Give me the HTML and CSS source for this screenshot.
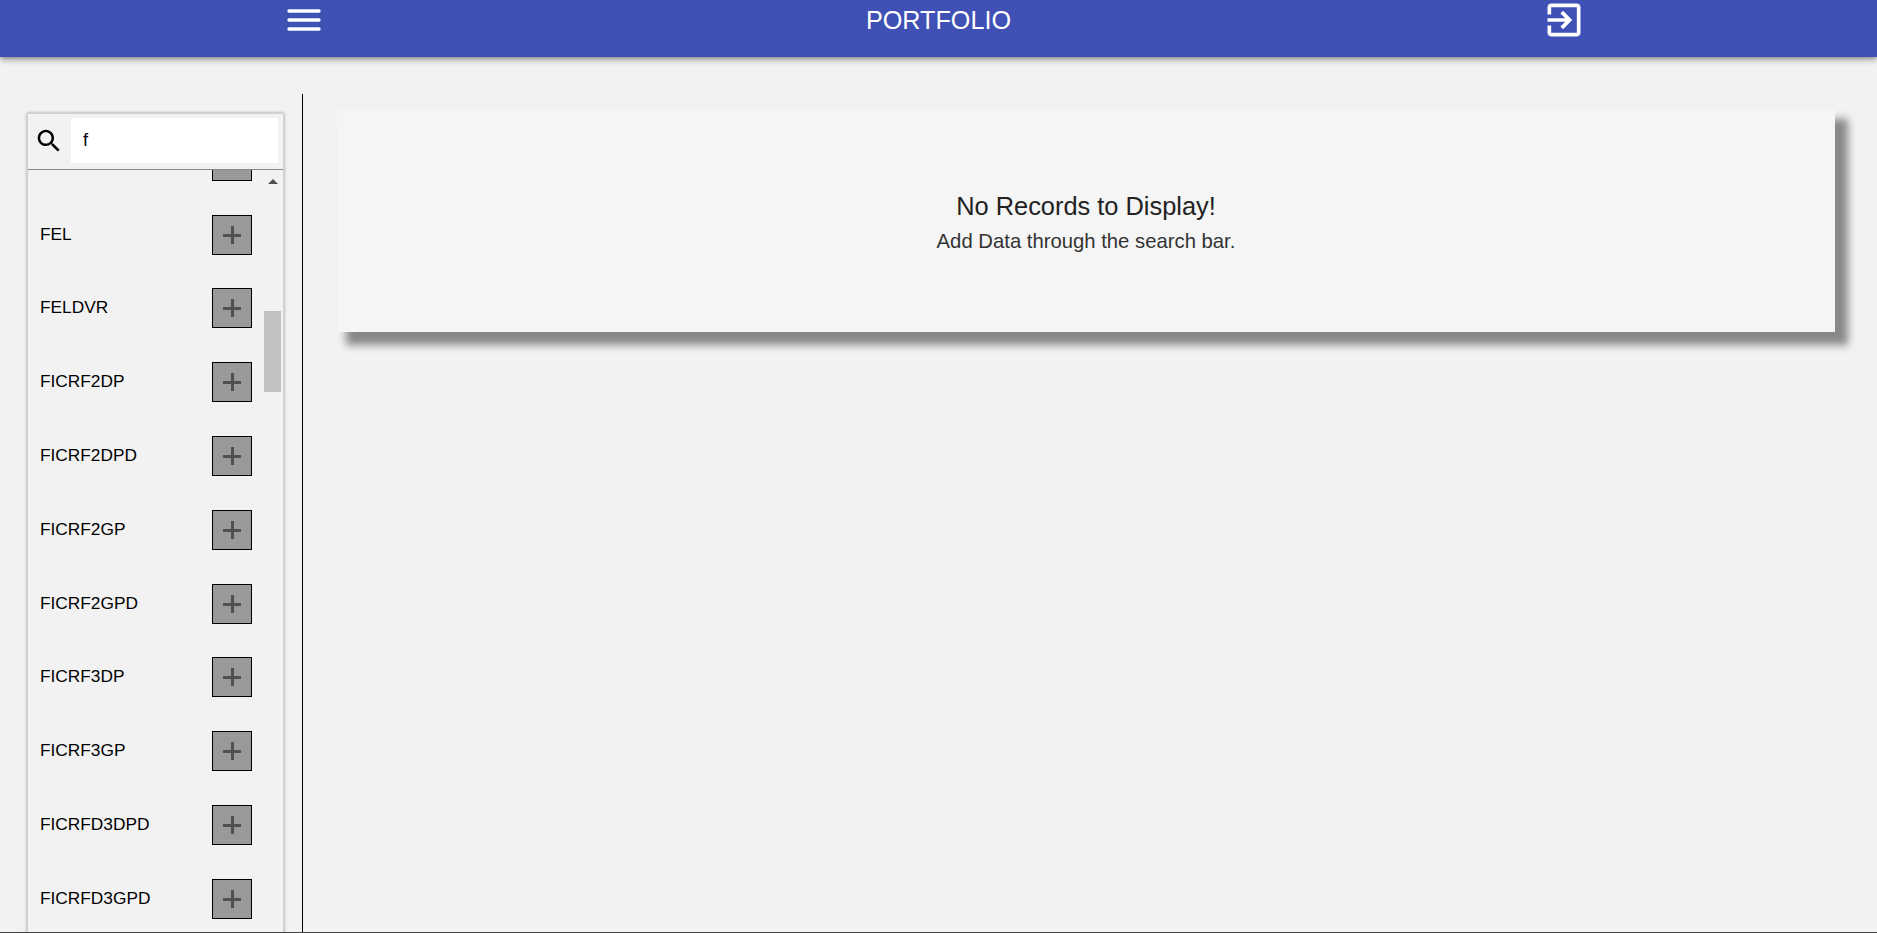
FILE: index.html
```html
<!DOCTYPE html>
<html lang="en">
<head>
<meta charset="utf-8">
<title>Portfolio</title>
<link rel="stylesheet" href="styles.css">
</head>
<body>
<header class="topbar">
  <button class="topbar-btn menu-btn" aria-label="Menu">
    <svg width="34" height="24" viewBox="0 0 34 24"><path d="M2 3h30M2 12h30M2 21h30" stroke="#fff" stroke-width="3.4" stroke-linecap="round" fill="none"/></svg>
  </button>
  <div class="topbar-title">PORTFOLIO</div>
  <button class="topbar-btn exit-btn" aria-label="Sign out">
    <svg width="44" height="44" viewBox="0 0 24 24"><path fill="#fff" d="M10.09 15.59L11.5 17l5-5-5-5-1.41 1.41L12.67 11H3v2h9.67l-2.58 2.59zM19 3H5c-1.11 0-2 .9-2 2v4h2V5h14v14H5v-4H3v4c0 1.1.89 2 2 2h14c1.1 0 2-.9 2-2V5c0-1.1-.9-2-2-2z"/></svg>
  </button>
</header>
<div class="page">
  <aside class="sidebar">
    <div class="finder">
      <div class="search-row">
        <svg class="search-icon" width="30" height="30" viewBox="0 0 24 24"><path fill="#000" d="M15.5 14h-.79l-.28-.27C15.41 12.59 16 11.11 16 9.5 16 5.91 13.09 3 9.5 3S3 5.91 3 9.5 5.91 16 9.5 16c1.61 0 3.09-.59 4.23-1.57l.27.28v.79l5 4.99L20.49 19l-4.99-5zm-6 0C7.01 14 5 11.99 5 9.5S7.01 5 9.5 5 14 7.01 14 9.5 11.99 14 9.5 14z"/></svg>
        <div class="search-input">f</div>
      </div>
      <div class="results">
        <div class="list">
          <div class="row"><span></span><button class="add"></button></div>
          <div class="row"><span>FEL</span><button class="add"></button></div>
          <div class="row"><span>FELDVR</span><button class="add"></button></div>
          <div class="row"><span>FICRF2DP</span><button class="add"></button></div>
          <div class="row"><span>FICRF2DPD</span><button class="add"></button></div>
          <div class="row"><span>FICRF2GP</span><button class="add"></button></div>
          <div class="row"><span>FICRF2GPD</span><button class="add"></button></div>
          <div class="row"><span>FICRF3DP</span><button class="add"></button></div>
          <div class="row"><span>FICRF3GP</span><button class="add"></button></div>
          <div class="row"><span>FICRFD3DPD</span><button class="add"></button></div>
          <div class="row"><span>FICRFD3GPD</span><button class="add"></button></div>
        </div>
        <div class="scrollbar">
          <div class="scroll-up"></div>
          <div class="scroll-thumb"></div>
        </div>
      </div>
    </div>
  </aside>
  <main class="content">
    <section class="empty-card">
      <h2>No Records to Display!</h2>
      <p>Add Data through the search bar.</p>
    </section>
  </main>
</div>
</body>
</html>
```

FILE: styles.css
```css
html, body {
  margin: 0;
  height: 100%;
  overflow: hidden;
}
body {
  background: #f2f2f2;
  font-family: "Liberation Sans", Arial, sans-serif;
  color: #000;
}
.topbar {
  height: 57px;
  background: #3f51b5;
  box-shadow: 0 2px 4px -1px rgba(0,0,0,.3), 0 4px 5px rgba(0,0,0,.14), 0 1px 10px rgba(0,0,0,.12);
  display: grid;
  grid-template-columns: 1fr 1fr 1fr;
  align-items: start;
  position: relative;
  color: #fff;
}
.topbar-btn {
  background: none;
  border: 0;
  padding: 0;
  display: flex;
  justify-self: start;
}
.menu-btn {
  margin: 8px 0 0 287px;
}
.exit-btn {
  margin: -2px 0 0 291px;
}
.topbar-title {
  font-size: 25.2px;
  text-align: center;
  margin-top: 6px;
}
.page {
  display: flex;
  height: 838px;
  margin-top: 37px;
  border-bottom: 1px solid #444;
}
.sidebar {
  width: 303px;
  flex: none;
  box-sizing: border-box;
  border-right: 1px solid #000;
  padding: 19px 0 0 27px;
  overflow: hidden;
}
.finder {
  width: 257px;
  box-sizing: border-box;
  height: 840px;
  border: 1px solid #d0d0d0;
  box-shadow: 0 0 3px rgba(0,0,0,.35);
}
.search-row {
  display: flex;
  align-items: flex-start;
  height: 56px;
  padding: 4px 5px 0 0;
  box-sizing: border-box;
  border-bottom: 1px solid #888;
}
.search-icon {
  margin: 8px 7px 0 6px;
}
.search-input {
  flex: 1;
  height: 45px;
  background: #fff;
  font-size: 18px;
  line-height: 44px;
  padding-left: 12px;
}
.results {
  display: flex;
  height: 780px;
  overflow: hidden;
}
.list {
  width: 236px;
  margin-top: -46px;
}
.row {
  display: flex;
  justify-content: space-between;
  align-items: center;
  height: 73.8px;
  padding: 0 12px 0 12px;
  box-sizing: border-box;
  font-size: 17.3px;
}
.row span {
  padding-bottom: 1px;
}
.add {
  width: 40px;
  height: 40px;
  background: #999;
  border: 1px solid #000;
  padding: 0;
  position: relative;
}
.add::before, .add::after {
  content: "";
  position: absolute;
  background: #505050;
}
.add::before {
  left: 10px;
  top: 18px;
  width: 18px;
  height: 3px;
}
.add::after {
  left: 18px;
  top: 10px;
  width: 3px;
  height: 18px;
}
.scrollbar {
  width: 19px;
  position: relative;
}
.scroll-up {
  width: 0;
  height: 0;
  border: 5px solid transparent;
  border-top: 0;
  border-bottom: 5px solid #505050;
  margin: 9px 0 0 4px;
}
.scroll-thumb {
  position: absolute;
  left: 0;
  top: 141px;
  width: 17px;
  height: 81px;
  background: #c1c1c1;
}
.content {
  flex: 1;
  padding: 16px 42px 0 34px;
}
.empty-card {
  height: 222px;
  background: #f5f5f5;
  box-shadow: 11px 11px 8px 2px #888;
  text-align: center;
  padding-top: 82px;
  box-sizing: border-box;
  color: #222;
}
.empty-card h2 {
  font-size: 25.4px;
  font-weight: 400;
  margin: 0 0 9px;
}
.empty-card p {
  font-size: 20.3px;
  margin: 0;
  color: #333;
}
```
